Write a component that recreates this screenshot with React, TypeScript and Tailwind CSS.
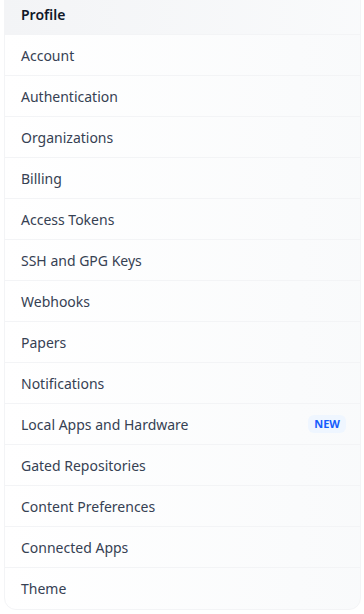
import React from 'react';

const items = [
  'Profile',
  'Account',
  'Authentication',
  'Organizations',
  'Billing',
  'Access Tokens',
  'SSH and GPG Keys',
  'Webhooks',
  'Papers',
  'Notifications',
  'Local Apps and Hardware',
  'Gated Repositories',
  'Content Preferences',
  'Connected Apps',
  'Theme',
];

const App: React.FC = () => {
  return (
    <div className="min-h-screen bg-white pl-1 pr-[3px]" style={{ fontFamily: '"Noto Sans", sans-serif' }}>
      <ul className="-mt-[7px] overflow-hidden rounded-b-xl border border-gray-100 bg-gradient-to-r from-white to-gray-50">
        {items.map((item, i) => (
          <li
            key={item}
            className={`flex h-[41px] items-center justify-between border-gray-100 px-4 ${
              i < items.length - 1 ? 'border-b' : ''
            } ${i === 0 ? 'bg-gradient-to-r from-gray-100 to-gray-50 font-semibold text-gray-900' : 'text-gray-700'}`}
          >
            <span className="text-[14px]">{item}</span>
            {item === 'Local Apps and Hardware' && (
              <span className="-mr-[2px] rounded-md bg-blue-50 px-[6px] py-[1px] text-[11px] font-bold leading-4 text-blue-600">
                NEW
              </span>
            )}
          </li>
        ))}
      </ul>
    </div>
  );
};

export default App;
